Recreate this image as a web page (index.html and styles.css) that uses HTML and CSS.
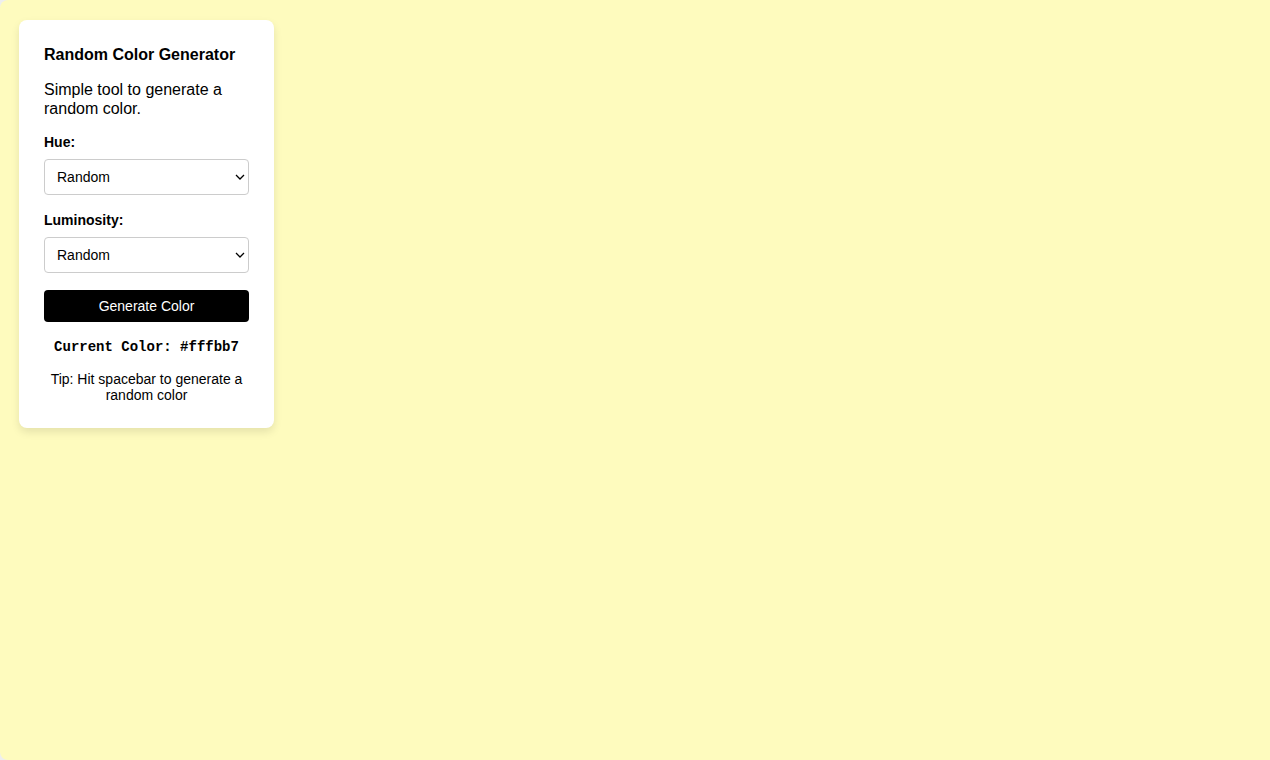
FILE: index.html
```html
<!DOCTYPE html>
<html lang="en">
<head>
    <meta charset="UTF-8">
    <meta name="viewport" content="width=device-width, initial-scale=1.0">
    <title>Random Color Generator</title>
    <link rel="stylesheet" href="styles.css">
</head>
<body>
    <div class="container">
        <h1>Random Color Generator</h1>
        <p class="intro">Simple tool to generate a random color.</p>

        <label for="hue">Hue:</label>
        <div class="select-box">
            <select id="hue">
                <option value="random">Random</option>
                <option value="red">Red</option>
                <option value="orange">Orange</option>
                <option value="yellow">Yellow</option>
                <option value="green">Green</option>
                <option value="blue">Blue</option>
                <option value="purple">Purple</option>
                <option value="pink">Pink</option>
            </select>
            <svg class="arrow" viewBox="0 0 10 6" aria-hidden="true"><path d="M1 1l4 4 4-4"/></svg>
        </div>

        <label for="luminosity">Luminosity:</label>
        <div class="select-box">
            <select id="luminosity">
                <option value="random">Random</option>
                <option value="bright">Bright</option>
                <option value="light">Light</option>
                <option value="dark">Dark</option>
            </select>
            <svg class="arrow" viewBox="0 0 10 6" aria-hidden="true"><path d="M1 1l4 4 4-4"/></svg>
        </div>

        <button type="button" id="generate">Generate Color</button>
        <p class="current">Current Color: <span id="colorCode">#fffbb7</span></p>
        <p class="tip">Tip: Hit spacebar to generate a random color</p>
    </div>
</body>
</html>
```

FILE: styles.css
```css
* {
    box-sizing: border-box;
}
html {
    background-color: #eee;
}
body {
    min-height: 100vh;
    margin: 0;
    padding: 20px 19px;
    font-family: "Liberation Sans", Arial, sans-serif;
    color: #000;
    background-color: #fefbbe;
    border-radius: 8px 0 0 8px;
}
.container {
    max-width: 255px;
    padding: 25px;
    background-color: #fff;
    border-radius: 8px;
    box-shadow: 0 4px 8px rgba(0, 0, 0, 0.1);
}
h1 {
    margin: 0 0 16px;
    font-size: 16px;
    line-height: 19px;
}
p {
    margin: 0;
}
.intro {
    margin-bottom: 16px;
    font-size: 16px;
    line-height: 19px;
}
label {
    display: block;
    margin-bottom: 8px;
    font-size: 14px;
    line-height: 17px;
    font-weight: bold;
}
.select-box {
    position: relative;
    margin-bottom: 17px;
}
select {
    display: block;
    width: 100%;
    height: 36px;
    padding: 0 12px;
    font-family: inherit;
    font-size: 14px;
    color: #000;
    background-color: #fff;
    border: 1px solid #ccc;
    border-radius: 4px;
    appearance: none;
}
.arrow {
    position: absolute;
    top: 15px;
    right: 4px;
    width: 10px;
    height: 6px;
    fill: none;
    stroke: #000;
    stroke-width: 1.3;
    pointer-events: none;
}
button {
    display: block;
    width: 100%;
    margin-bottom: 17px;
    padding: 8px;
    font-family: inherit;
    font-size: 14px;
    line-height: 16px;
    color: #fff;
    background-color: #000;
    border: none;
    border-radius: 4px;
    cursor: pointer;
}
.current {
    margin-bottom: 16px;
    font-family: "Courier New", "Liberation Mono", monospace;
    font-size: 14px;
    line-height: 16px;
    font-weight: bold;
    text-align: center;
}
.tip {
    font-size: 14px;
    line-height: 16px;
    text-align: center;
}
```
